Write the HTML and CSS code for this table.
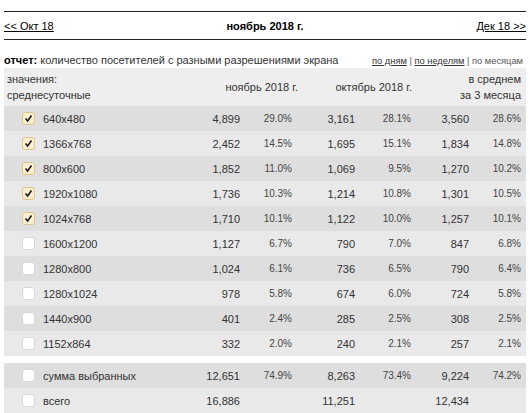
FILE: index.html
```html
<!DOCTYPE html>
<html lang="ru">
<head>
  <meta charset="UTF-8">
  <title>Разрешения экрана</title>
  <link rel="stylesheet" href="styles.css">
</head>
<body>
  <div class="month-nav">
    <a href="#" class="prev">&lt;&lt; Окт 18</a>
    <b class="current">ноябрь 2018 г.</b>
    <a href="#" class="next">Дек 18 &gt;&gt;</a>
  </div>

  <div class="report-bar">
    <span><b>отчет:</b> количество посетителей с разными разрешениями экрана</span>
    <span class="modes"><a href="#">по дням</a> | <a href="#">по неделям</a> | по месяцам</span>
  </div>

  <div class="stats">
    <div class="row head">
      <div class="label">значения:<br>среднесуточные</div>
      <div class="h-nov">ноябрь 2018 г.</div>
      <div class="h-oct">октябрь 2018 г.</div>
      <div class="h-avg">в среднем<br>за 3 месяца</div>
    </div>

    <div class="row dark">
      <div class="label"><span class="box on"><svg viewBox="0 0 13 13"><path d="M3 6.5 L5.5 9.5 L10 3"/></svg></span>640x480</div>
      <div class="num">4,899</div><div class="pct">29.0%</div>
      <div class="num">3,161</div><div class="pct">28.1%</div>
      <div class="num">3,560</div><div class="pct">28.6%</div>
    </div>
    <div class="row light">
      <div class="label"><span class="box on"><svg viewBox="0 0 13 13"><path d="M3 6.5 L5.5 9.5 L10 3"/></svg></span>1366x768</div>
      <div class="num">2,452</div><div class="pct">14.5%</div>
      <div class="num">1,695</div><div class="pct">15.1%</div>
      <div class="num">1,834</div><div class="pct">14.8%</div>
    </div>
    <div class="row dark">
      <div class="label"><span class="box on"><svg viewBox="0 0 13 13"><path d="M3 6.5 L5.5 9.5 L10 3"/></svg></span>800x600</div>
      <div class="num">1,852</div><div class="pct">11.0%</div>
      <div class="num">1,069</div><div class="pct">9.5%</div>
      <div class="num">1,270</div><div class="pct">10.2%</div>
    </div>
    <div class="row light">
      <div class="label"><span class="box on"><svg viewBox="0 0 13 13"><path d="M3 6.5 L5.5 9.5 L10 3"/></svg></span>1920x1080</div>
      <div class="num">1,736</div><div class="pct">10.3%</div>
      <div class="num">1,214</div><div class="pct">10.8%</div>
      <div class="num">1,301</div><div class="pct">10.5%</div>
    </div>
    <div class="row dark">
      <div class="label"><span class="box on"><svg viewBox="0 0 13 13"><path d="M3 6.5 L5.5 9.5 L10 3"/></svg></span>1024x768</div>
      <div class="num">1,710</div><div class="pct">10.1%</div>
      <div class="num">1,122</div><div class="pct">10.0%</div>
      <div class="num">1,257</div><div class="pct">10.1%</div>
    </div>
    <div class="row light">
      <div class="label"><span class="box"></span>1600x1200</div>
      <div class="num">1,127</div><div class="pct">6.7%</div>
      <div class="num">790</div><div class="pct">7.0%</div>
      <div class="num">847</div><div class="pct">6.8%</div>
    </div>
    <div class="row dark">
      <div class="label"><span class="box"></span>1280x800</div>
      <div class="num">1,024</div><div class="pct">6.1%</div>
      <div class="num">736</div><div class="pct">6.5%</div>
      <div class="num">790</div><div class="pct">6.4%</div>
    </div>
    <div class="row light">
      <div class="label"><span class="box"></span>1280x1024</div>
      <div class="num">978</div><div class="pct">5.8%</div>
      <div class="num">674</div><div class="pct">6.0%</div>
      <div class="num">724</div><div class="pct">5.8%</div>
    </div>
    <div class="row dark">
      <div class="label"><span class="box"></span>1440x900</div>
      <div class="num">401</div><div class="pct">2.4%</div>
      <div class="num">285</div><div class="pct">2.5%</div>
      <div class="num">308</div><div class="pct">2.5%</div>
    </div>
    <div class="row light">
      <div class="label"><span class="box"></span>1152x864</div>
      <div class="num">332</div><div class="pct">2.0%</div>
      <div class="num">240</div><div class="pct">2.1%</div>
      <div class="num">257</div><div class="pct">2.1%</div>
    </div>

    <div class="row dark total-first">
      <div class="label"><span class="box"></span>сумма выбранных</div>
      <div class="num">12,651</div><div class="pct">74.9%</div>
      <div class="num">8,263</div><div class="pct">73.4%</div>
      <div class="num">9,224</div><div class="pct">74.2%</div>
    </div>
    <div class="row light">
      <div class="label"><span class="box"></span>всего</div>
      <div class="num">16,886</div><div class="pct"></div>
      <div class="num">11,251</div><div class="pct"></div>
      <div class="num">12,434</div><div class="pct"></div>
    </div>
  </div>
</body>
</html>
```

FILE: styles.css
```css
body {
  margin: 0;
  padding: 11px 4px 0;
  background: #fff;
  color: #333;
  font-family: "Liberation Sans", Arial, sans-serif;
  font-size: 11px;
}

a {
  color: #000;
}

/* month navigation */
.month-nav {
  display: grid;
  grid-template-columns: 1fr auto 1fr;
  align-items: center;
  height: 27px;
  border-top: 1px solid #222;
  border-bottom: 1px solid #222;
  font-size: 11px;
}

.month-nav .current {
  color: #000;
}

.month-nav .next {
  justify-self: end;
}

/* report line */
.report-bar {
  display: flex;
  justify-content: space-between;
  align-items: baseline;
  height: 28px;
  padding-top: 13px;
  box-sizing: border-box;
  line-height: 15px;
  font-size: 11px;
}

.report-bar b {
  color: #000;
}

.modes {
  font-size: 9.3px;
  color: #555;
  padding-right: 3px;
}

.modes a {
  color: #333;
}

/* table */
.row {
  display: grid;
  grid-template-columns: 181px 55px 52px 63px 56px 58px 52px 5px;
  align-items: center;
  height: 25px;
}

.row.head {
  height: 38px;
  background: #eeeeee;
  line-height: 16px;
}

.row.dark {
  background: #dedede;
}

.row.light {
  background: #e9e9e9;
}

.row.total-first {
  margin-top: 7px;
}

.head .label {
  padding-left: 3px;
}

.h-nov {
  grid-column: 2 / 4;
  justify-self: end;
  margin-right: -6px;
}

.h-oct {
  grid-column: 4 / 6;
  justify-self: end;
  margin-right: -1px;
}

.h-avg {
  grid-column: 6 / 8;
  text-align: right;
}

.label {
  display: flex;
  align-items: center;
  padding-left: 18px;
}

.box {
  width: 11px;
  height: 11px;
  margin-right: 8px;
  border: 1px solid #d8d8d8;
  border-radius: 3px;
  background: #fff;
  flex: none;
  display: flex;
}

.box.on {
  background: #fcefcf;
  border-color: #dfc48f;
}

.box svg {
  width: 11px;
  height: 11px;
}

.box path {
  fill: none;
  stroke: #111;
  stroke-width: 1.8;
}

.num {
  text-align: right;
}

.pct {
  text-align: right;
  font-size: 10px;
  color: #444;
}
```
